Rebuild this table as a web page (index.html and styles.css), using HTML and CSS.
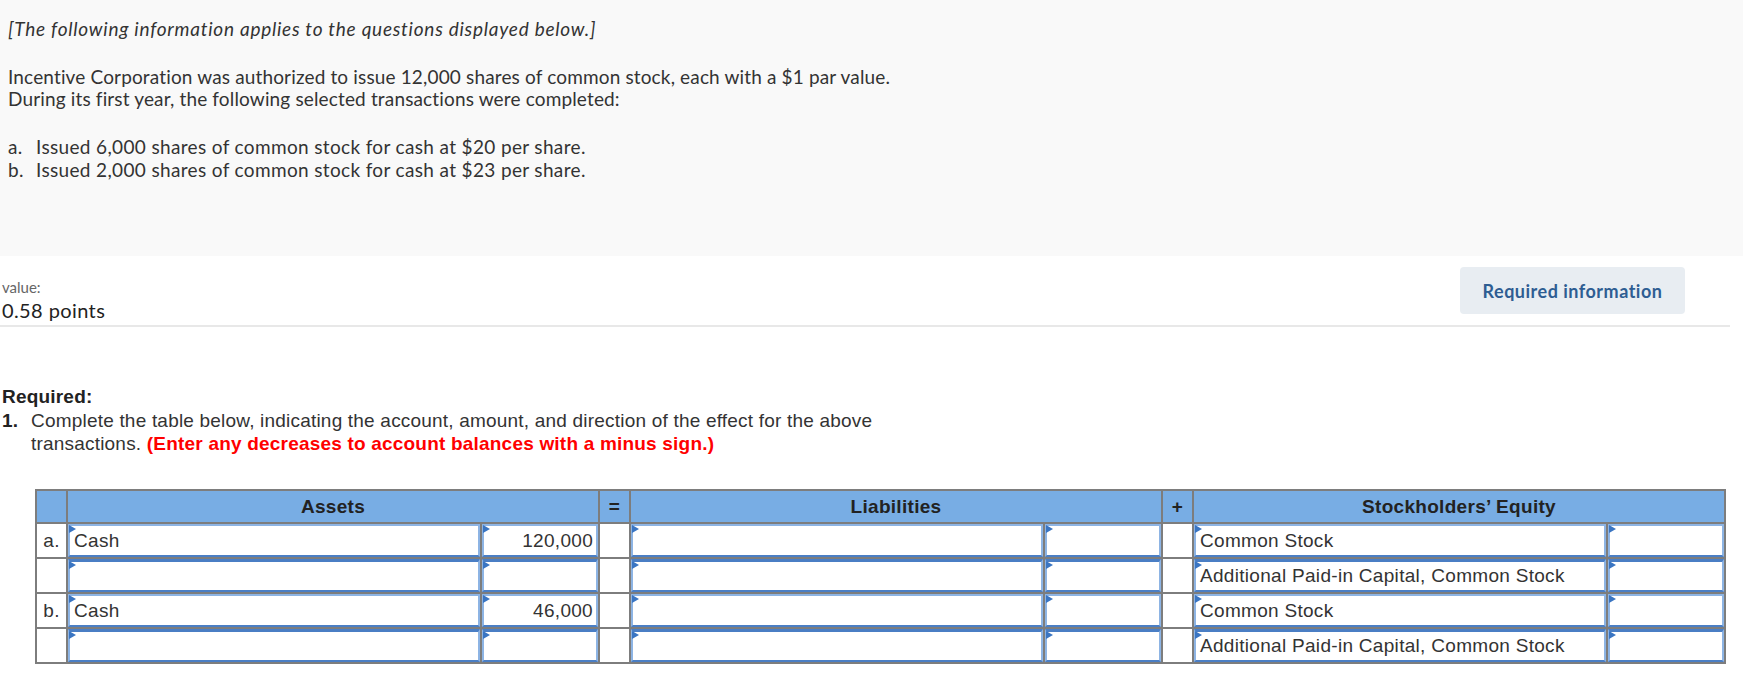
FILE: index.html
```html
<!DOCTYPE html>
<html>
<head>
<meta charset="utf-8">
<link rel="stylesheet" href="styles.css">
</head>
<body>
<section class="intro">
  <p class="lead">[The following information applies to the questions displayed below.]</p>
  <p class="desc">Incentive Corporation was authorized to issue 12,000 shares of common stock, each with a $1 par value.<br>During its first year, the following selected transactions were completed:</p>
  <ul class="steps">
    <li><span class="mk">a.</span>Issued 6,000 shares of common stock for cash at $20 per share.</li>
    <li><span class="mk">b.</span>Issued 2,000 shares of common stock for cash at $23 per share.</li>
  </ul>
</section>

<div class="meta">
  <div class="score">
    <div class="value-label">value:</div>
    <div class="points">0.58 points</div>
  </div>
  <div class="req-btn">Required information</div>
</div>

<div class="task">
  <div class="req-title">Required:</div>
  <div class="item"><span class="num-mk">1.</span><p class="item-text">Complete the table below, indicating the account, amount, and direction of the effect for the above<br>transactions. <strong class="red">(Enter any decreases to account balances with a minus sign.)</strong></p></div>
</div>

<div class="eq-table">
  <div class="h"></div>
  <div class="h span2">Assets</div>
  <div class="h">=</div>
  <div class="h span2">Liabilities</div>
  <div class="h">+</div>
  <div class="h span2">Stockholders’ Equity</div>

  <div class="c lbl">a.</div>
  <div class="c"><div class="fld">Cash</div></div>
  <div class="c"><div class="fld num">120,000</div></div>
  <div class="c"></div>
  <div class="c"><div class="fld"></div></div>
  <div class="c"><div class="fld"></div></div>
  <div class="c"></div>
  <div class="c"><div class="fld">Common Stock</div></div>
  <div class="c"><div class="fld"></div></div>

  <div class="c lbl"></div>
  <div class="c"><div class="fld dark">&nbsp;</div></div>
  <div class="c"><div class="fld dark"></div></div>
  <div class="c"></div>
  <div class="c"><div class="fld dark"></div></div>
  <div class="c"><div class="fld dark"></div></div>
  <div class="c"></div>
  <div class="c"><div class="fld dark">Additional Paid-in Capital, Common Stock</div></div>
  <div class="c"><div class="fld dark"></div></div>

  <div class="c lbl">b.</div>
  <div class="c"><div class="fld">Cash</div></div>
  <div class="c"><div class="fld num">46,000</div></div>
  <div class="c"></div>
  <div class="c"><div class="fld"></div></div>
  <div class="c"><div class="fld"></div></div>
  <div class="c"></div>
  <div class="c"><div class="fld">Common Stock</div></div>
  <div class="c"><div class="fld"></div></div>

  <div class="c lbl"></div>
  <div class="c"><div class="fld dark">&nbsp;</div></div>
  <div class="c"><div class="fld dark"></div></div>
  <div class="c"></div>
  <div class="c"><div class="fld dark"></div></div>
  <div class="c"><div class="fld dark"></div></div>
  <div class="c"></div>
  <div class="c"><div class="fld dark">Additional Paid-in Capital, Common Stock</div></div>
  <div class="c"><div class="fld dark"></div></div>
</div>
</body>
</html>
```

FILE: styles.css
```css
body {
  margin: 0;
  font-family: Lato, "Open Sans", sans-serif;
  color: #333;
  background: #fff;
}

.intro {
  background: #f9f9f9;
  height: 256px;
  box-sizing: border-box;
  padding: 18px 8px 0;
  font-size: 19px;
  letter-spacing: 0.15px;
  color: #333;
}

.intro p {
  margin: 0;
  line-height: 22px;
}

.intro .lead {
  font-style: italic;
  letter-spacing: 0.75px;
}

.intro .desc {
  margin-top: 26px;
}

.steps {
  list-style: none;
  margin: 25px 0 0;
  padding: 0;
  line-height: 23px;
  letter-spacing: 0.35px;
}

.steps .mk {
  display: inline-block;
  width: 28px;
}

.meta {
  display: flex;
  justify-content: space-between;
  width: 1730px;
  padding: 11px 0 4px;
  border-bottom: 2px solid #e8e8e8;
}

.score {
  margin-top: 11px;
  padding-left: 2px;
}

.value-label {
  font-size: 15px;
  line-height: 18px;
  color: #666;
}

.points {
  margin-top: 3px;
  font-size: 20px;
  letter-spacing: 0.4px;
  line-height: 22px;
  color: #222;
}

.req-btn {
  width: 225px;
  height: 47px;
  margin-right: 45px;
  background: #e8edf2;
  border-radius: 4px;
  color: #2e5d92;
  font-weight: 700;
  font-size: 18px;
  letter-spacing: 0.5px;
  display: flex;
  align-items: center;
  justify-content: center;
}

.task {
  width: 940px;
  margin-top: 58px;
  padding-left: 2px;
  font-family: "Liberation Sans", Arial, sans-serif;
  font-size: 19px;
  letter-spacing: 0.2px;
  line-height: 23px;
  color: #333;
}

.req-title {
  font-weight: bold;
  color: #222;
  line-height: 24px;
}

.item {
  display: flex;
}

.num-mk {
  flex: 0 0 29px;
  font-weight: bold;
  color: #222;
}

.item-text {
  margin: 0;
}

.red {
  color: #f00;
}

.eq-table {
  margin: 34px 0 0 35px;
  display: grid;
  grid-template-columns: 29px 412px 116px 29px 412px 116px 29px 412px 116px;
  grid-template-rows: 31px repeat(4, 33px);
  gap: 2px;
  padding: 2px;
  width: max-content;
  background: #7d7d7d;
  font-family: "Liberation Sans", Arial, sans-serif;
  font-size: 19px;
  letter-spacing: 0.3px;
  color: #333;
}

.h {
  background: #78ade4;
  font-weight: bold;
  color: #222;
  display: flex;
  align-items: center;
  justify-content: center;
}

.span2 {
  grid-column: span 2;
}

.c {
  background: #fff;
}

.lbl {
  display: flex;
  align-items: center;
  justify-content: center;
}

.fld {
  position: relative;
  height: 100%;
  box-sizing: border-box;
  border: 2px solid #8db4e4;
  border-bottom-color: #4a7ec4;
  padding: 0 3px 0 4px;
  line-height: 29px;
  white-space: nowrap;
  background: #fff;
}

.fld.dark {
  border-top: 3px solid #4a7ec4;
  line-height: 28px;
}

.fld::before {
  content: "";
  position: absolute;
  top: -1px;
  left: -1px;
  border-left: 7px solid #3a75c2;
  border-top: 4px solid transparent;
  border-bottom: 4px solid transparent;
}

.num {
  text-align: right;
}
```
